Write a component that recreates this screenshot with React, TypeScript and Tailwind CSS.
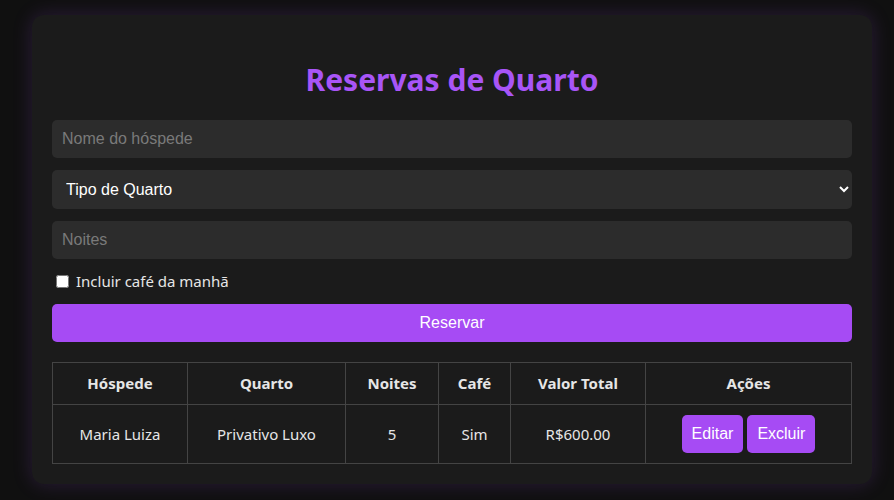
import React from "react";

export default function App() {
  return (
    <div className="min-h-[500px] w-full bg-[#101010] pt-[15px] pl-[32px]" style={{ fontFamily: '"Noto Sans", "Open Sans", sans-serif' }}>
      <div className="w-[840px] rounded-[12px] bg-[#1b1b1b] px-[20px] pt-[47px] pb-[20px] shadow-[0_0_20px_rgba(168,85,247,0.18)]">
        <h1 className="mb-[22px] text-center text-[30px] font-bold leading-[36px] text-[#a855f7]">Reservas de Quarto</h1>
        <div className="flex flex-col" style={{ fontFamily: '"Liberation Sans", Arial, sans-serif' }}>
          <input
            className="h-[38px] w-full rounded-[5px] bg-[#2c2c2c] px-[10px] text-[16px] text-white outline-none placeholder:text-[#7a7a7a]"
            placeholder="Nome do hóspede"
          />
          <select className="mt-[12px] h-[39px] w-full rounded-[5px] bg-[#2c2c2c] px-[10px] text-[16px] text-white outline-none">
            <option>Tipo de Quarto</option>
          </select>
          <input
            className="mt-[12px] h-[38px] w-full rounded-[5px] bg-[#2c2c2c] px-[10px] text-[16px] text-white outline-none placeholder:text-[#7a7a7a]"
            placeholder="Noites"
          />
        </div>
        <label className="mt-[12px] flex items-center gap-[7px] text-[15px] leading-[20px] text-[#e6e6e6]">
          <input type="checkbox" className="ml-[4px] h-[13px] w-[13px]" />
          <span>Incluir café da manhã</span>
        </label>
        <button
          className="mt-[13px] h-[38px] w-full rounded-[5px] bg-[#a64bf4] text-[16px] text-white"
          style={{ fontFamily: '"Liberation Sans", Arial, sans-serif' }}
        >
          Reservar
        </button>
        <table className="mt-[20px] w-full border-collapse text-center text-[15px] text-[#e6e6e6]">
          <thead>
            <tr className="h-[42px]">
              <th className="w-[135px] border border-[#444] font-bold">Hóspede</th>
              <th className="w-[158px] border border-[#444] font-bold">Quarto</th>
              <th className="w-[93px] border border-[#444] font-bold">Noites</th>
              <th className="w-[72px] border border-[#444] font-bold">Café</th>
              <th className="w-[135px] border border-[#444] font-bold">Valor Total</th>
              <th className="border border-[#444] font-bold">Ações</th>
            </tr>
          </thead>
          <tbody>
            <tr className="h-[59px]">
              <td className="border border-[#444]">Maria Luiza</td>
              <td className="border border-[#444]">Privativo Luxo</td>
              <td className="border border-[#444]">5</td>
              <td className="border border-[#444]">Sim</td>
              <td className="border border-[#444]">R$600.00</td>
              <td className="border border-[#444]">
                <div className="flex justify-center gap-[4px]" style={{ fontFamily: '"Liberation Sans", Arial, sans-serif' }}>
                  <button className="h-[38px] rounded-[5px] bg-[#a64bf4] px-[10px] text-[16px] text-white">Editar</button>
                  <button className="h-[38px] rounded-[5px] bg-[#a64bf4] px-[10px] text-[16px] text-white">Excluir</button>
                </div>
              </td>
            </tr>
          </tbody>
        </table>
      </div>
    </div>
  );
}
